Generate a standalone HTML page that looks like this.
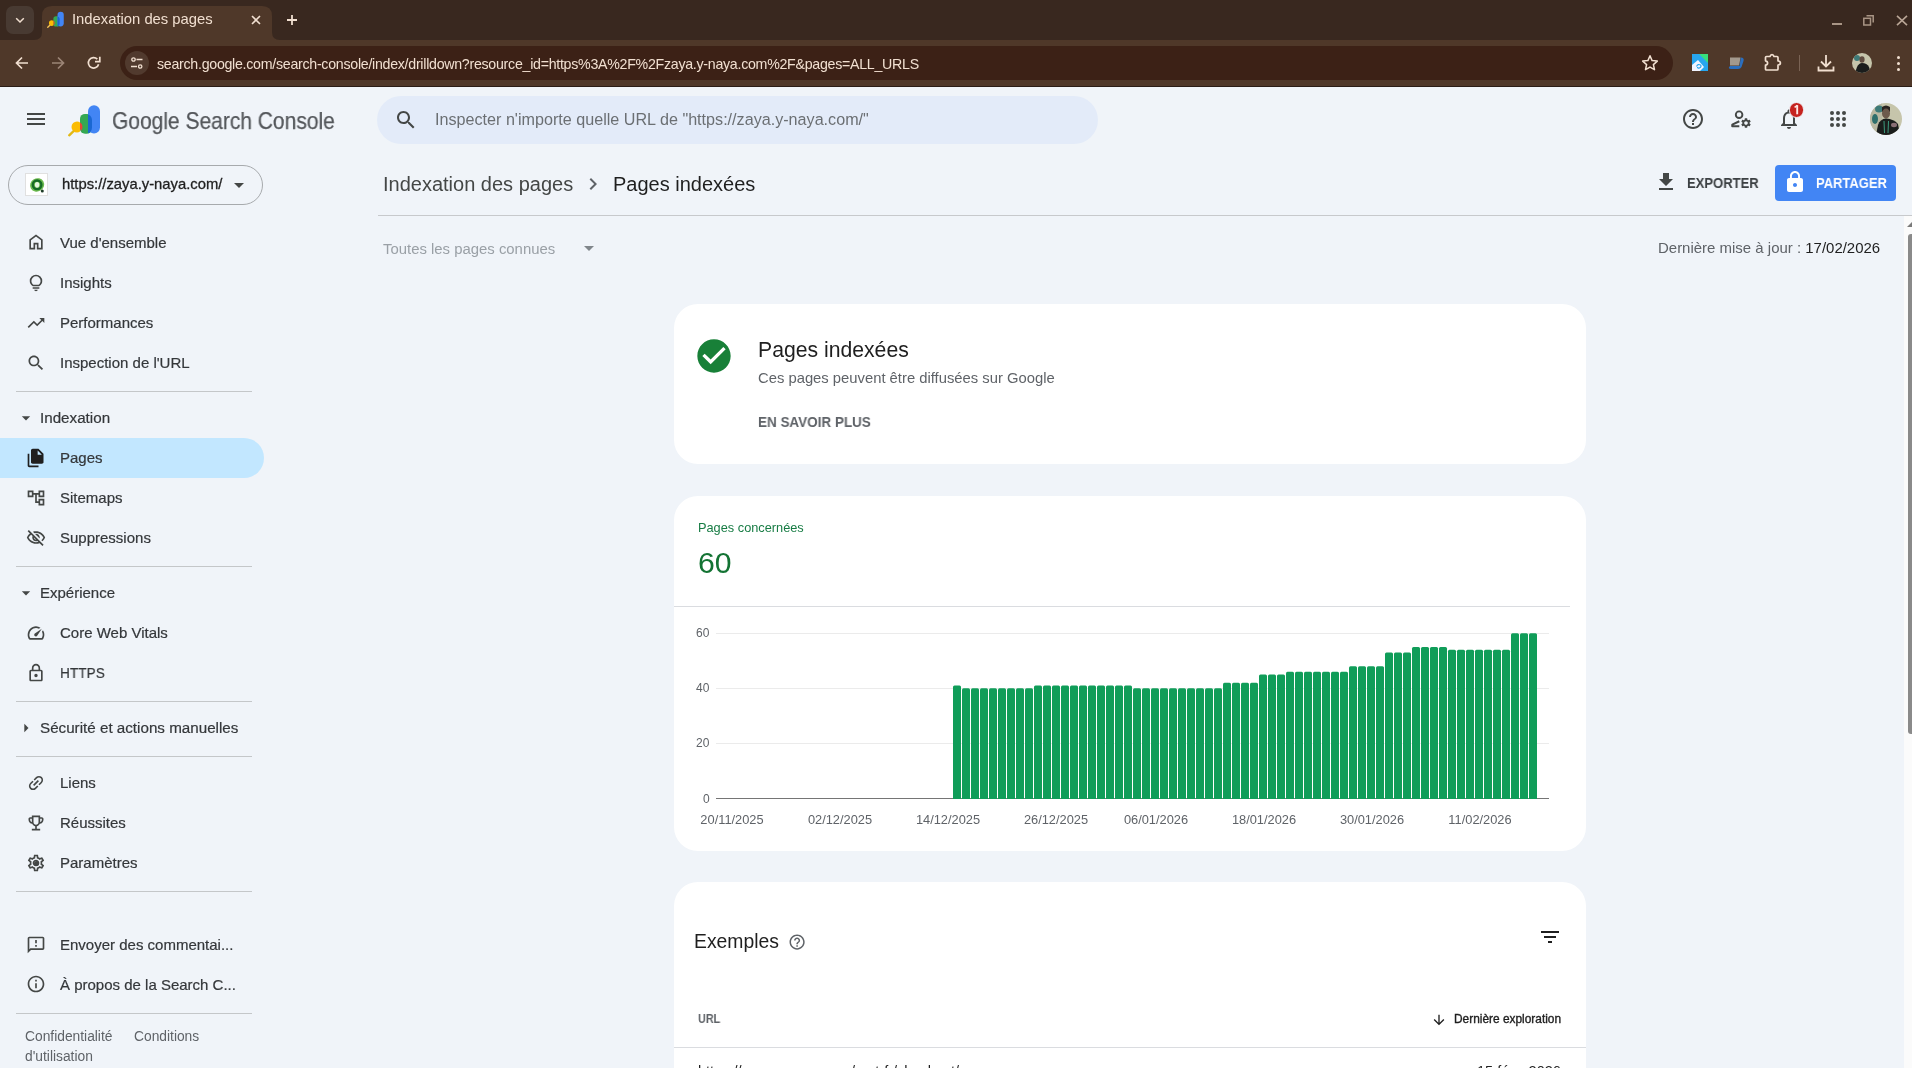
<!DOCTYPE html>
<html><head><meta charset="utf-8"><title>Indexation des pages</title>
<style>
html,body{margin:0;padding:0;width:1912px;height:1068px;overflow:hidden;background:#f0f4f9;}
body{position:relative;font-family:"Liberation Sans", sans-serif;}
.t{will-change:transform;}
.t{position:absolute;line-height:1;white-space:nowrap;}
.r{position:absolute;}
.s{position:absolute;overflow:visible;}
</style></head><body>
<div class="r" style="left:0px;top:0px;width:1912px;height:40px;background:#39281f;"></div>
<div class="r" style="left:0px;top:40px;width:1912px;height:47px;background:#4f3829;"></div>
<div class="r" style="left:0px;top:86px;width:1912px;height:1px;background:#2a1d16;"></div>
<div class="r" style="left:6px;top:6px;width:28px;height:28px;background:#483a32;border-radius:7px;"></div>
<svg class="s" style="left:14px;top:15px;" width="12" height="10" viewBox="0 0 12 10"><path d="M2.2 3.2 L6 7 L9.8 3.2" stroke="#f1dfd0" stroke-width="1.5" fill="none"/></svg>
<svg class="s" style="left:34px;top:6px;" width="254" height="34" viewBox="0 0 254 34"><path d="M0 34 Q8 34 8 26 L8 10 Q8 0 18 0 L228 0 Q238 0 238 10 L238 26 Q238 34 246 34 Z" fill="#4f3829"/></svg>
<svg class="s" style="left:44.2px;top:8.9px;" width="22.9" height="20.8" viewBox="0 0 44 40"><defs><clipPath id="gclip2"><rect x="18" y="13.9" width="12" height="19.8" rx="6"/></clipPath></defs>
<rect x="18" y="13.9" width="12" height="19.8" rx="5" fill="#34a853"/>
<rect x="26" y="5.2" width="12" height="28.3" rx="6" fill="#4285f4"/>
<g clip-path="url(#gclip2)"><rect x="26" y="5" width="12" height="30" fill="#1967d2"/><circle cx="15" cy="27" r="5.5" fill="#ea4335"/></g>
<path d="M15 21.5 A5.5 5.5 0 0 0 15 32.5 A5.5 5.5 0 0 0 18 31.6 V22.4 A5.5 5.5 0 0 0 15 21.5Z" fill="#fbbc04"/>
<path d="M7.2 35.3 L11.3 31.4" stroke="#f2c25a" stroke-width="2.6" stroke-linecap="round"/></svg>
<div class="t" style="left:72.00px;top:11.97px;font-size:14.8px;color:#f1dfd0;font-weight:400;">Indexation des pages</div>
<svg class="s" style="left:251px;top:15px;" width="10" height="10" viewBox="0 0 10 10"><path d="M1 1L9 9M9 1L1 9" stroke="#f1dfd0" stroke-width="1.6"/></svg>
<svg class="s" style="left:286px;top:14px;" width="12" height="12" viewBox="0 0 12 12"><path d="M6 1V11M1 6H11" stroke="#f1dfd0" stroke-width="1.8"/></svg>
<div class="r" style="left:1832px;top:23px;width:10px;height:1.5px;background:#a99585;"></div>
<svg class="s" style="left:1863px;top:15px;" width="12" height="11" viewBox="0 0 12 11"><path d="M3.5 0.8H10.2V7.5" stroke="#a99585" stroke-width="1.5" fill="none"/><rect x="0.8" y="3.3" width="6.7" height="6.7" stroke="#a99585" stroke-width="1.5" fill="none"/></svg>
<svg class="s" style="left:1896px;top:15px;" width="12" height="11" viewBox="0 0 12 11"><path d="M1 0.8L11 10.2M11 0.8L1 10.2" stroke="#b9a595" stroke-width="1.6"/></svg>
<svg class="s" style="left:15px;top:56px;" width="14" height="14" viewBox="0 0 14 14"><path d="M13 7H2M7 1.5L1.5 7L7 12.5" stroke="#f1dfd0" stroke-width="1.7" fill="none"/></svg>
<svg class="s" style="left:51px;top:56px;" width="14" height="14" viewBox="0 0 14 14"><path d="M1 7H12M7 1.5L12.5 7L7 12.5" stroke="#9c8576" stroke-width="1.7" fill="none"/></svg>
<svg class="s" style="left:87px;top:56px;" width="14" height="14" viewBox="0 0 14 14"><path d="M11.6 8.2 A5.2 5.2 0 1 1 10.3 3.2" stroke="#f1dfd0" stroke-width="1.7" fill="none"/><path d="M12.8 0.8 V5.6 H8" stroke="#f1dfd0" stroke-width="1.7" fill="none"/></svg>
<div class="r" style="left:120px;top:46px;width:1553px;height:34px;background:#3c2116;border-radius:17px;"></div>
<div class="r" style="left:125px;top:51px;width:24px;height:24px;background:#513a2e;border-radius:12px;"></div>
<svg class="s" style="left:130px;top:56px;" width="14" height="14" viewBox="0 0 14 14"><circle cx="3.5" cy="3.5" r="1.7" stroke="#f1dfd0" stroke-width="1.3" fill="none"/><path d="M6.5 3.5H12.5M1 10.5H7" stroke="#f1dfd0" stroke-width="1.4"/><circle cx="10.2" cy="10.5" r="1.7" stroke="#f1dfd0" stroke-width="1.3" fill="none"/></svg>
<div class="t" id="urltxt" style="left:157.00px;top:56.58px;font-size:14.2px;color:#f1dfd0;font-weight:400;letter-spacing:-0.27px;">search.google.com/search-console/index/drilldown?resource_id=https%3A%2F%2Fzaya.y-naya.com%2F&amp;pages=ALL_URLS</div>
<svg class="s" style="left:1641px;top:54px;" width="18" height="18" viewBox="0 0 18 18"><path d="M9 1.8 L11.1 6.6 L16.3 7.1 L12.4 10.6 L13.5 15.7 L9 13.1 L4.5 15.7 L5.6 10.6 L1.7 7.1 L6.9 6.6 Z" stroke="#f1dfd0" stroke-width="1.5" fill="none" stroke-linejoin="round"/></svg>
<svg class="s" style="left:1692px;top:54px;" width="16" height="17" viewBox="0 0 16 17"><rect width="16" height="17" fill="#27a6ef"/><path d="M7 0H16V9Z" fill="#37e07d"/><path d="M0 11 L6 6 L12 13 L8 17 H0Z" fill="#f1f4ff"/><path d="M4.5 12.5 Q6 9.5 8.5 11 Q10 12.5 7.5 14 Q5.5 14.5 5.5 13" stroke="#27a6ef" stroke-width="1.1" fill="none"/><path d="M11 17 L16 12 V17Z" fill="#27a6ef"/></svg>
<svg class="s" style="left:1728px;top:56px;" width="18" height="15" viewBox="0 0 18 15"><path d="M2 1.5H12.5L11 9.5H2Z" fill="#a3998d"/><path d="M12.8 1.5 Q16.5 1.5 15.5 5 L13.5 11 Q12.5 13 10 13 H3 Q1 13 0.8 11.5 L2 10 H11.5 Z" fill="#2b6fbf"/></svg>
<svg class="s" style="left:1763px;top:52px;" width="20" height="20" viewBox="0 0 20 20"><path d="M3.5 4.5 H7 Q7.5 2.6 9 2.6 Q10.5 2.6 11 4.5 H14 Q15 4.5 15 5.5 V9 Q17.4 9.2 17.4 11 Q17.4 12.8 15 13 V17 Q15 18 14 18 H3.5 Q2.5 18 2.5 17 V13.2 Q4.6 12.8 4.6 11 Q4.6 9.2 2.5 8.8 V5.5 Q2.5 4.5 3.5 4.5 Z" stroke="#f1dfd0" stroke-width="1.7" fill="none" stroke-linejoin="round"/></svg>
<div class="r" style="left:1798.5px;top:55px;width:1.2px;height:16px;background:#7a6354;"></div>
<svg class="s" style="left:1817px;top:54px;" width="18" height="18" viewBox="0 0 18 18"><path d="M9 1V12M4 7.5L9 12.5L14 7.5" stroke="#f1dfd0" stroke-width="1.8" fill="none"/><path d="M1.5 12.5V16.5H16.5V12.5" stroke="#f1dfd0" stroke-width="1.8" fill="none"/></svg>
<svg class="s" style="left:1852px;top:52.6px;" width="20" height="20" viewBox="0 0 20 20"><defs><clipPath id="pc1"><circle cx="10" cy="10" r="10"/></clipPath></defs><g clip-path="url(#pc1)"><rect width="20" height="20" fill="#c6c5ab"/><ellipse cx="5" cy="5" rx="3" ry="3" fill="#3e7a78"/><ellipse cx="10" cy="6.5" rx="2.6" ry="3.2" fill="#5f4c40"/><path d="M3 20 L5 14 Q7 10 10 10 Q15 10 17 14 L19 20Z" fill="#1a1d1c"/></g></svg>
<div class="r" style="left:1896.5px;top:55.5px;width:3px;height:3px;background:#f1dfd0;border-radius:50%;"></div>
<div class="r" style="left:1896.5px;top:61.5px;width:3px;height:3px;background:#f1dfd0;border-radius:50%;"></div>
<div class="r" style="left:1896.5px;top:67.5px;width:3px;height:3px;background:#f1dfd0;border-radius:50%;"></div>
<svg class="s" style="left:24px;top:107px;" width="24" height="24" viewBox="0 0 24 24"><path d="M3 18h18v-2H3v2zm0-5h18v-2H3v2zm0-7v2h18V6H3z" fill="#444746"/></svg>
<svg class="s" style="left:62px;top:100px;" width="44" height="40" viewBox="0 0 44 40"><defs><clipPath id="gclip"><rect x="18" y="13.9" width="12" height="19.8" rx="6"/></clipPath></defs>
<rect x="18" y="13.9" width="12" height="19.8" rx="5" fill="#34a853"/>
<rect x="26" y="5.2" width="12" height="28.3" rx="6" fill="#4285f4"/>
<g clip-path="url(#gclip)"><rect x="26" y="5" width="12" height="30" fill="#1967d2"/><circle cx="15" cy="27" r="5.5" fill="#ea4335"/></g>
<path d="M15 21.5 A5.5 5.5 0 0 0 15 32.5 A5.5 5.5 0 0 0 18 31.6 V22.4 A5.5 5.5 0 0 0 15 21.5Z" fill="#fbbc04"/>
<path d="M7.2 35.3 L11.3 31.4" stroke="#e2b814" stroke-width="2.3" stroke-linecap="round"/></svg>
<div class="t" style="left:112.00px;top:110.16px;font-size:23.2px;color:#54575b;font-weight:400;-webkit-text-stroke:0.25px #54575b;transform:scaleX(0.905);transform-origin:0 0;">Google Search Console</div>
<div class="r" style="left:377px;top:96px;width:721px;height:48px;background:#e3ebf9;border-radius:24px;"></div>
<svg class="s" style="left:394px;top:108px;" width="24" height="24" viewBox="0 0 24 24"><path d="M15.5 14h-.79l-.28-.27C15.41 12.59 16 11.11 16 9.5 16 5.91 13.09 3 9.5 3S3 5.91 3 9.5 5.91 16 9.5 16c1.61 0 3.09-.59 4.23-1.57l.27.28v.79l5 4.99L20.49 19l-4.99-5zm-6 0C7.01 14 5 11.99 5 9.5S7.01 5 9.5 5 14 7.01 14 9.5 11.99 14 9.5 14z" fill="#444746"/></svg>
<div class="t" style="left:435.00px;top:110.83px;font-size:16.15px;color:#6b6f73;font-weight:400;">Inspecter n'importe quelle URL de "https://zaya.y-naya.com/"</div>
<svg class="s" style="left:1681px;top:107px;" width="24" height="24" viewBox="0 0 24 24"><path d="M11 18h2v-2h-2v2zm1-16C6.48 2 2 6.48 2 12s4.48 10 10 10 10-4.48 10-10S17.52 2 12 2zm0 18c-4.41 0-8-3.59-8-8s3.59-8 8-8 8 3.59 8 8-3.59 8-8 8zm0-14c-2.21 0-4 1.79-4 4h2c0-1.1.9-2 2-2s2 .9 2 2c0 2-3 1.75-3 5h2c0-2.25 3-2.5 3-5 0-2.21-1.79-4-4-4z" fill="#444746"/></svg>
<svg class="s" style="left:1729px;top:108px;" width="26" height="22" viewBox="0 0 26 22"><circle cx="10.1" cy="6.7" r="3.3" stroke="#444746" stroke-width="1.9" fill="none"/>
<path d="M10.3 13.2 L3.3 16.6 V18.2 H10.3" stroke="#444746" stroke-width="2.1" fill="none" stroke-linejoin="round"/></svg>
<svg class="s" style="left:1740.1px;top:116.8px;" width="12" height="12" viewBox="0 0 24 24"><path d="M19.14 12.94c.04-.3.06-.61.06-.94 0-.32-.02-.64-.07-.94l2.03-1.58c.18-.14.23-.41.12-.61l-1.92-3.32c-.12-.22-.37-.29-.59-.22l-2.39.96c-.5-.38-1.03-.7-1.62-.94l-.36-2.54c-.04-.24-.24-.41-.48-.41h-3.84c-.24 0-.43.17-.47.41l-.36 2.54c-.59.24-1.13.57-1.62.94l-2.39-.96c-.22-.08-.47 0-.59.22L2.74 8.87c-.12.21-.08.47.12.61l2.03 1.58c-.05.3-.09.63-.09.94s.02.64.07.94l-2.03 1.58c-.18.14-.23.41-.12.61l1.92 3.32c.12.22.37.29.59.22l2.39-.96c.5.38 1.03.7 1.62.94l.36 2.54c.05.24.24.41.48.41h3.84c.24 0 .44-.17.47-.41l.36-2.54c.59-.24 1.13-.56 1.62-.94l2.39.96c.22.08.47 0 .59-.22l1.92-3.32c.12-.22.07-.47-.12-.61l-2.01-1.58zM12 15.6c-1.98 0-3.6-1.62-3.6-3.6s1.62-3.6 3.6-3.6 3.6 1.62 3.6 3.6-1.62 3.6-3.6 3.6z" fill="#444746"/></svg>
<svg class="s" style="left:1777px;top:107px;" width="24" height="24" viewBox="0 0 24 24"><path d="M12 22c1.1 0 2-.9 2-2h-4c0 1.1.89 2 2 2zm6-6v-5c0-3.07-1.64-5.64-4.5-6.32V4c0-.83-.67-1.5-1.5-1.5s-1.5.67-1.5 1.5v.68C7.63 5.36 6 7.92 6 11v5l-2 2v1h16v-1l-2-2zm-2 1H8v-6c0-2.48 1.51-4.5 4-4.5s4 2.02 4 4.5v6z" fill="#444746"/></svg>
<div class="r" style="left:1788.5px;top:102px;width:15.5px;height:15.5px;background:#c5221f;border-radius:50%;border:0.5px solid #f0f4f9;box-sizing:border-box;"></div>
<svg class="s" style="left:1792px;top:103px;" width="9" height="13" viewBox="0 0 9 13"><path d="M5.2 2.2 V11.3" stroke="#ffe8e6" stroke-width="1.9"/><path d="M5.4 2.4 L2.6 4.4" stroke="#ffe8e6" stroke-width="1.6"/></svg>
<div class="r" style="left:1830.0px;top:111.0px;width:4px;height:4px;background:#444746;border-radius:50%;"></div>
<div class="r" style="left:1830.0px;top:117.2px;width:4px;height:4px;background:#444746;border-radius:50%;"></div>
<div class="r" style="left:1830.0px;top:123.4px;width:4px;height:4px;background:#444746;border-radius:50%;"></div>
<div class="r" style="left:1836.2px;top:111.0px;width:4px;height:4px;background:#444746;border-radius:50%;"></div>
<div class="r" style="left:1836.2px;top:117.2px;width:4px;height:4px;background:#444746;border-radius:50%;"></div>
<div class="r" style="left:1836.2px;top:123.4px;width:4px;height:4px;background:#444746;border-radius:50%;"></div>
<div class="r" style="left:1842.4px;top:111.0px;width:4px;height:4px;background:#444746;border-radius:50%;"></div>
<div class="r" style="left:1842.4px;top:117.2px;width:4px;height:4px;background:#444746;border-radius:50%;"></div>
<div class="r" style="left:1842.4px;top:123.4px;width:4px;height:4px;background:#444746;border-radius:50%;"></div>
<svg class="s" style="left:1870px;top:103px;" width="32" height="32" viewBox="0 0 32 32"><defs><clipPath id="av"><circle cx="16" cy="16" r="16"/></clipPath></defs><g clip-path="url(#av)">
<rect width="32" height="32" fill="#c6c5ab"/><rect x="0" y="0" width="12" height="32" fill="#b9b8a2"/>
<ellipse cx="9" cy="6" rx="4" ry="3.5" fill="#3e7a78"/><ellipse cx="5" cy="16" rx="3" ry="5" fill="#2f6f6c"/>
<path d="M12 4 Q16 1 20 4 L20 9 Q16 7 12 9Z" fill="#2a2420"/>
<ellipse cx="16" cy="10.5" rx="4" ry="5" fill="#6d5a4c"/>
<path d="M6 32 L8 22 Q10 16 16 15.5 Q24 16 28 21 L30 32Z" fill="#1a1d1c"/>
<path d="M14 18 L14.5 30 M18.5 18 L18 30" stroke="#3d9a7e" stroke-width="1"/>
<ellipse cx="24" cy="22" rx="3" ry="2.2" fill="#8a6f76"/></g></svg>
<div class="r" style="left:8px;top:165px;width:255px;height:40px;background:transparent;border:1px solid #a7aaad;border-radius:20px;box-sizing:border-box;"></div>
<div class="r" style="left:25px;top:173px;width:23px;height:23px;background:#ffffff;border:1px solid #e0e0e0;box-sizing:border-box;"></div>
<svg class="s" style="left:28px;top:176px;" width="17" height="17" viewBox="0 0 17 17"><ellipse cx="9.1" cy="8.9" rx="7.2" ry="6.6" fill="#6dbb4f" transform="rotate(-30 9.1 8.9)"/><circle cx="9.1" cy="8.8" r="4.3" stroke="#166b25" stroke-width="2.4" fill="none"/><ellipse cx="9.1" cy="8.8" rx="2.2" ry="2.8" fill="#e6f6e0"/><circle cx="14.3" cy="15.1" r="1.5" fill="#1d3b27"/></svg>
<div class="t" style="left:61.80px;top:177.47px;font-size:14.8px;color:#1f1f1f;font-weight:400;-webkit-text-stroke:0.3px #1f1f1f;">https://zaya.y-naya.com/</div>
<svg class="s" style="left:227px;top:173px;" width="24" height="24" viewBox="0 0 24 24"><path d="M7 10l5 5 5-5z" fill="#444746"/></svg>
<svg class="s" style="left:26px;top:232.4px;" width="20" height="20" viewBox="0 -960 960 960"><path d="M240-200h120v-240h240v240h120v-360L480-740 240-560v360Zm-80 80v-480l320-240 320 240v480H520v-240h-80v240H160Zm320-350Z" fill="#444746"/></svg>
<div class="t" style="left:60.00px;top:234.50px;font-size:15.0px;color:#34373a;font-weight:400;-webkit-text-stroke:0.2px #34373a;">Vue d'ensemble</div>
<svg class="s" style="left:26px;top:272.8px;" width="20" height="20" viewBox="0 -960 960 960"><path d="M480-80q-33 0-56.5-23.5T400-160h160q0 33-23.5 56.5T480-80ZM320-200v-80h320v80H320Zm10-120q-69-41-109.5-110T180-580q0-125 87.5-212.5T480-880q125 0 212.5 87.5T780-580q0 81-40.5 150T630-320H330Zm24-80h252q45-32 69.5-79T700-580q0-92-64-156t-156-64q-92 0-156 64t-64 156q0 54 24.5 101t69.5 79Zm126 0Z" fill="#444746"/></svg>
<div class="t" style="left:60.00px;top:274.90px;font-size:15.0px;color:#34373a;font-weight:400;-webkit-text-stroke:0.2px #34373a;">Insights</div>
<svg class="s" style="left:26px;top:313.0px;" width="20" height="20" viewBox="0 0 24 24"><path d="M16 6l2.29 2.29-4.88 4.88-4-4L2 16.59 3.41 18l6-6 4 4 6.3-6.29L22 12V6z" fill="#444746"/></svg>
<div class="t" style="left:60.00px;top:315.10px;font-size:15.0px;color:#34373a;font-weight:400;-webkit-text-stroke:0.2px #34373a;">Performances</div>
<svg class="s" style="left:26px;top:353.2px;" width="20" height="20" viewBox="0 0 24 24"><path d="M15.5 14h-.79l-.28-.27C15.41 12.59 16 11.11 16 9.5 16 5.91 13.09 3 9.5 3S3 5.91 3 9.5 5.91 16 9.5 16c1.61 0 3.09-.59 4.23-1.57l.27.28v.79l5 4.99L20.49 19l-4.99-5zm-6 0C7.01 14 5 11.99 5 9.5S7.01 5 9.5 5 14 7.01 14 9.5 11.99 14 9.5 14z" fill="#444746"/></svg>
<div class="t" style="left:60.00px;top:355.30px;font-size:15.0px;color:#34373a;font-weight:400;-webkit-text-stroke:0.2px #34373a;">Inspection de l'URL</div>
<div class="r" style="left:16px;top:391px;width:236px;height:1px;background:#c4c7c9;"></div>
<svg class="s" style="left:16px;top:408px;" width="20" height="20" viewBox="0 0 24 24"><path d="M7 10l5 5 5-5z" fill="#444746"/></svg>
<div class="t" style="left:40.20px;top:410.33px;font-size:15.2px;color:#34373a;font-weight:400;-webkit-text-stroke:0.2px #34373a;">Indexation</div>
<div class="r" style="left:0px;top:438px;width:264px;height:40px;background:#c2e7ff;border-radius:0 20px 20px 0;"></div>
<svg class="s" style="left:26px;top:448.0px;" width="20" height="20" viewBox="0 -960 960 960"><path d="M760-200H320q-33 0-56.5-23.5T240-280v-560q0-33 23.5-56.5T320-920h280l240 240v400q0 33-23.5 56.5T760-200ZM560-640h200L560-840v200ZM160-40q-33 0-56.5-23.5T80-120v-560h80v560h440v80H160Z" fill="#1f1f1f"/></svg>
<div class="t" style="left:60.00px;top:450.10px;font-size:15.0px;color:#34373a;font-weight:400;-webkit-text-stroke:0.2px #34373a;">Pages</div>
<svg class="s" style="left:26px;top:488.1px;" width="20" height="20" viewBox="0 0 24 24"><path d="M22 11V3h-7v3H9V3H2v8h7V8h2v10h4v3h7v-8h-7v3h-2V8h2v3h7zM7 9H4V5h3v4zm10 6h3v4h-3v-4zm0-10h3v4h-3V5z" fill="#444746"/></svg>
<div class="t" style="left:60.00px;top:490.20px;font-size:15.0px;color:#34373a;font-weight:400;-webkit-text-stroke:0.2px #34373a;">Sitemaps</div>
<svg class="s" style="left:26px;top:528.0px;" width="20" height="20" viewBox="0 0 24 24"><path d="M12 6c3.79 0 7.17 2.13 8.82 5.5-.59 1.22-1.42 2.27-2.41 3.12l1.41 1.41c1.39-1.23 2.49-2.77 3.18-4.53C21.27 7.11 17 4 12 4c-1.27 0-2.49.2-3.64.57l1.65 1.65C10.66 6.09 11.32 6 12 6zm-1.07 1.14L13 9.21c.57.25 1.03.71 1.28 1.28l2.07 2.07c.08-.34.14-.7.14-1.07C16.5 9.01 14.48 7 12 7c-.37 0-.72.05-1.07.14zM2.01 3.87l2.68 2.68C3.06 7.83 1.77 9.53 1 11.5 2.73 15.89 7 19 12 19c1.52 0 2.98-.29 4.32-.82l3.42 3.42 1.41-1.41L3.42 2.45 2.01 3.87zm7.5 7.5l2.61 2.61c-.04.01-.08.02-.12.02-1.38 0-2.5-1.12-2.5-2.5 0-.05.01-.08.01-.13zm-3.4-3.4l1.75 1.75c-.23.55-.36 1.15-.36 1.78 0 2.48 2.02 4.5 4.5 4.5.63 0 1.23-.13 1.77-.36l.98.98c-.88.24-1.8.38-2.75.38-3.79 0-7.17-2.13-8.82-5.5.7-1.43 1.72-2.61 2.93-3.53z" fill="#444746"/></svg>
<div class="t" style="left:60.00px;top:530.10px;font-size:15.0px;color:#34373a;font-weight:400;-webkit-text-stroke:0.2px #34373a;">Suppressions</div>
<div class="r" style="left:16px;top:566px;width:236px;height:1px;background:#c4c7c9;"></div>
<svg class="s" style="left:16px;top:583px;" width="20" height="20" viewBox="0 0 24 24"><path d="M7 10l5 5 5-5z" fill="#444746"/></svg>
<div class="t" style="left:40.10px;top:585.30px;font-size:15.0px;color:#34373a;font-weight:400;-webkit-text-stroke:0.2px #34373a;">Expérience</div>
<svg class="s" style="left:26px;top:623.1px;" width="20" height="20" viewBox="0 -960 960 960"><path d="M418-340q24 24 62 23.5t56-27.5l224-336-336 224q-27 18-28.5 55t22.5 61Zm62-460q59 0 113.5 16.5T696-734l-76 48q-33-17-68.5-25.5T480-720q-133 0-226.5 93.5T160-400q0 42 11.5 83t32.5 77h552q23-38 33.5-79t10.5-85q0-36-8.5-70T766-540l48-76q30 47 47.5 100T880-406q1 57-13 109t-41 99q-11 18-30 28t-40 10H204q-21 0-40-10t-30-28q-26-45-40-95.5T80-400q0-83 31.5-155.5t86-127Q252-737 325-768.5T480-800Zm7 313Z" fill="#444746"/></svg>
<div class="t" style="left:60.00px;top:625.20px;font-size:15.0px;color:#34373a;font-weight:400;-webkit-text-stroke:0.2px #34373a;">Core Web Vitals</div>
<svg class="s" style="left:26px;top:663.0px;" width="20" height="20" viewBox="0 0 24 24"><path d="M18 8h-1V6c0-2.76-2.24-5-5-5S7 3.24 7 6v2H6c-1.1 0-2 .9-2 2v10c0 1.1.9 2 2 2h12c1.1 0 2-.9 2-2V10c0-1.1-.9-2-2-2zM9 6c0-1.66 1.34-3 3-3s3 1.34 3 3v2H9V6zm9 14H6V10h12v10zm-6-3c1.1 0 2-.9 2-2s-.9-2-2-2-2 .9-2 2 .9 2 2 2z" fill="#444746"/></svg>
<div class="t" style="left:60.00px;top:664.93px;font-size:15.2px;color:#34373a;font-weight:400;-webkit-text-stroke:0.2px #34373a;transform:scaleX(0.9);transform-origin:0 0;">HTTPS</div>
<div class="r" style="left:16px;top:701px;width:236px;height:1px;background:#c4c7c9;"></div>
<svg class="s" style="left:16px;top:718px;" width="20" height="20" viewBox="0 0 24 24"><path d="M10 17l5-5-5-5v10z" fill="#444746"/></svg>
<div class="t" style="left:40.10px;top:720.13px;font-size:15.2px;color:#34373a;font-weight:400;-webkit-text-stroke:0.2px #34373a;">Sécurité et actions manuelles</div>
<div class="r" style="left:16px;top:756px;width:236px;height:1px;background:#c4c7c9;"></div>
<svg class="s" style="left:26px;top:773.0px;transform:rotate(-45deg);" width="20" height="20" viewBox="0 0 24 24"><path d="M3.9 12c0-1.71 1.39-3.1 3.1-3.1h4V7H7c-2.76 0-5 2.24-5 5s2.24 5 5 5h4v-1.9H7c-1.71 0-3.1-1.39-3.1-3.1zM8 13h8v-2H8v2zm9-6h-4v1.9h4c1.71 0 3.1 1.39 3.1 3.1s-1.39 3.1-3.1 3.1h-4V17h4c2.76 0 5-2.24 5-5s-2.24-5-5-5z" fill="#444746"/></svg>
<div class="t" style="left:60.00px;top:775.10px;font-size:15.0px;color:#34373a;font-weight:400;-webkit-text-stroke:0.2px #34373a;">Liens</div>
<svg class="s" style="left:26px;top:812.8px;" width="20" height="20" viewBox="0 0 24 24"><path d="M19 5h-2V3H7v2H5c-1.1 0-2 .9-2 2v1c0 2.55 1.92 4.63 4.39 4.94.63 1.5 1.98 2.63 3.61 2.96V19H7v2h10v-2h-4v-3.1c1.63-.33 2.98-1.46 3.61-2.96C19.08 12.63 21 10.55 21 8V7c0-1.1-.9-2-2-2zM5 8V7h2v3.82C5.84 10.4 5 9.3 5 8zm7 6c-1.65 0-3-1.35-3-3V5h6v6c0 1.65-1.35 3-3 3zm7-6c0 1.3-.84 2.4-2 2.82V7h2v1z" fill="#444746"/></svg>
<div class="t" style="left:60.00px;top:814.90px;font-size:15.0px;color:#34373a;font-weight:400;-webkit-text-stroke:0.2px #34373a;">Réussites</div>
<svg class="s" style="left:26px;top:853.1px;" width="20" height="20" viewBox="0 0 24 24"><path d="M19.43 12.98c.04-.32.07-.64.07-.98 0-.34-.03-.66-.07-.98l2.11-1.65c.19-.15.24-.42.12-.64l-2-3.46c-.09-.16-.26-.25-.44-.25-.06 0-.12.01-.17.03l-2.49 1c-.52-.4-1.08-.73-1.69-.98l-.38-2.65C14.46 2.18 14.25 2 14 2h-4c-.25 0-.46.18-.49.42l-.38 2.65c-.61.25-1.17.59-1.690.98l-2.49-1c-.06-.02-.12-.03-.18-.03-.17 0-.34.09-.43.25l-2 3.46c-.13.22-.07.49.12.64l2.11 1.65c-.04.32-.07.65-.07.98 0 .33.03.66.07.98l-2.11 1.65c-.19.15-.24.42-.12.64l2 3.46c.09.16.26.25.44.25.06 0 .12-.01.17-.03l2.49-1c.52.4 1.08.73 1.69.98l.38 2.65c.03.24.24.42.49.42h4c.25 0 .46-.18.49-.42l.38-2.65c.61-.25 1.17-.59 1.69-.98l2.49 1c.06.02.12.03.18.03.17 0 .34-.09.43-.25l2-3.46c.12-.22.07-.49-.12-.64l-2.11-1.65zm-1.98-1.71c.04.31.05.52.05.73 0 .21-.02.43-.05.73l-.14 1.13.89.7 1.08.84-.7 1.21-1.27-.51-1.04-.42-.9.68c-.43.32-.84.56-1.25.73l-1.06.43-.16 1.13-.2 1.35h-1.4l-.19-1.35-.16-1.13-1.06-.43c-.43-.18-.83-.41-1.23-.71l-.91-.7-1.06.43-1.27.51-.7-1.21 1.08-.84.89-.7-.14-1.13c-.03-.31-.05-.54-.05-.74s.02-.43.05-.73l.14-1.13-.89-.7-1.08-.84.7-1.21 1.27.51 1.04.42.9-.68c.43-.32.84-.56 1.25-.73l1.06-.43.16-1.13.2-1.35h1.39l.19 1.35.16 1.13 1.06.43c.43.18.83.41 1.23.71l.91.7 1.06-.43 1.27-.51.7 1.21-1.07.85-.89.7.14 1.13zM12 8c-2.21 0-4 1.79-4 4s1.79 4 4 4 4-1.79 4-4-1.79-4-4-4zm0 6c-1.1 0-2-.9-2-2s.9-2 2-2 2 .9 2 2-.9 2-2 2z" fill="#444746"/></svg>
<div class="r" style="left:33.5px;top:860.6px;width:5px;height:5px;background:#444746;border-radius:50%;"></div>
<div class="t" style="left:60.00px;top:855.20px;font-size:15.0px;color:#34373a;font-weight:400;-webkit-text-stroke:0.2px #34373a;">Paramètres</div>
<div class="r" style="left:16px;top:891px;width:236px;height:1px;background:#c4c7c9;"></div>
<svg class="s" style="left:26px;top:935.3px;" width="20" height="20" viewBox="0 0 24 24"><path d="M20 2H4c-1.1 0-1.99.9-1.99 2L2 22l4-4h14c1.1 0 2-.9 2-2V4c0-1.1-.9-2-2-2zm0 14H5.17l-.59.59-.58.58V4h16v12zm-9-4h2v2h-2zm0-6h2v4h-2z" fill="#444746"/></svg>
<div class="t" style="left:60.00px;top:937.40px;font-size:15.0px;color:#34373a;font-weight:400;-webkit-text-stroke:0.2px #34373a;">Envoyer des commentai...</div>
<svg class="s" style="left:26px;top:974.4px;" width="20" height="20" viewBox="0 0 24 24"><path d="M11 7h2v2h-2zm0 4h2v6h-2zm1-9C6.48 2 2 6.48 2 12s4.48 10 10 10 10-4.48 10-10S17.52 2 12 2zm0 18c-4.41 0-8-3.59-8-8s3.59-8 8-8 8 3.59 8 8-3.59 8-8 8z" fill="#444746"/></svg>
<div class="t" style="left:60.00px;top:976.90px;font-size:15.0px;color:#34373a;font-weight:400;-webkit-text-stroke:0.2px #34373a;">À propos de la Search C...</div>
<div class="r" style="left:16px;top:1013px;width:236px;height:1px;background:#c4c7c9;"></div>
<div class="t" style="left:24.50px;top:1029.92px;font-size:13.8px;color:#5f6368;font-weight:400;">Confidentialité</div>
<div class="t" style="left:133.50px;top:1029.92px;font-size:13.8px;color:#5f6368;font-weight:400;">Conditions</div>
<div class="t" style="left:24.50px;top:1050.22px;font-size:13.8px;color:#5f6368;font-weight:400;">d'utilisation</div>
<div class="t" style="left:382.50px;top:174.07px;font-size:20px;color:#444746;font-weight:400;">Indexation des pages</div>
<svg class="s" style="left:581px;top:172px;" width="24" height="24" viewBox="0 0 24 24"><path d="M10 6L8.59 7.41 13.17 12l-4.58 4.59L10 18l6-6z" fill="#5f6368"/></svg>
<div class="t" style="left:613.40px;top:174.07px;font-size:20px;color:#1f1f1f;font-weight:400;">Pages indexées</div>
<div class="r" style="left:378px;top:215px;width:1534px;height:1px;background:#c7c9cc;"></div>
<svg class="s" style="left:1654px;top:170px;" width="24" height="24" viewBox="0 0 24 24"><path d="M19 9h-4V3H9v6H5l7 7 7-7zM5 18v2h14v-2H5z" fill="#444746"/></svg>
<div class="t" style="left:1686.50px;top:176.10px;font-size:14.3px;color:#3c4043;font-weight:700;transform:scaleX(0.912);transform-origin:0 0;">EXPORTER</div>
<div class="r" style="left:1775px;top:165px;width:121px;height:36px;background:#4285f4;border-radius:4px;"></div>
<svg class="s" style="left:1783px;top:170px;" width="24" height="24" viewBox="0 0 24 24"><path d="M18 8h-1V6c0-2.76-2.24-5-5-5S7 3.24 7 6v2H6c-1.1 0-2 .9-2 2v10c0 1.1.9 2 2 2h12c1.1 0 2-.9 2-2V10c0-1.1-.9-2-2-2zm-6 9c-1.1 0-2-.9-2-2s.9-2 2-2 2 .9 2 2-.9 2-2 2zm3.1-9H8.9V6c0-1.71 1.39-3.1 3.1-3.1 1.71 0 3.1 1.39 3.1 3.1v2z" fill="#ffffff"/></svg>
<div class="t" style="left:1816.20px;top:176.10px;font-size:14.3px;color:#ffffff;font-weight:700;transform:scaleX(0.908);transform-origin:0 0;">PARTAGER</div>
<div class="t" style="left:382.50px;top:242.19px;font-size:14.9px;color:#9aa0a6;font-weight:400;">Toutes les pages connues</div>
<svg class="s" style="left:577px;top:236px;" width="24" height="24" viewBox="0 0 24 24"><path d="M7 10l5 5 5-5z" fill="#80868b"/></svg>
<div class="t" style="left:1658.00px;top:240.42px;font-size:14.98px;color:#5f6368;font-weight:400;">Dernière mise à jour : <span style="color:#1f1f1f">17/02/2026</span></div>
<div class="r" style="left:1904px;top:216px;width:8px;height:852px;background:#fbfbfb;"></div>
<svg class="s" style="left:1907px;top:222px;" width="5" height="5" viewBox="0 0 5 5"><path d="M0 5 L5 0 L5 5Z" fill="#7a7a7a"/></svg>
<div class="r" style="left:1908px;top:234px;width:6px;height:500px;background:#8a8a8a;border-radius:3px;"></div>
<div class="r" style="left:674px;top:304px;width:912px;height:160px;background:#ffffff;border-radius:24px;"></div>
<svg class="s" style="left:694.0px;top:336.0px;" width="40" height="40" viewBox="0 0 24 24"><path d="M12 2C6.48 2 2 6.48 2 12s4.48 10 10 10 10-4.48 10-10S17.52 2 12 2zm-2 15l-5-5 1.41-1.41L10 14.17l7.59-7.59L19 8l-9 9z" fill="#188038"/></svg>
<div class="t" style="left:758.10px;top:339.05px;font-size:21.2px;color:#1f1f1f;font-weight:400;">Pages indexées</div>
<div class="t" style="left:758.00px;top:370.97px;font-size:14.8px;color:#5f6368;font-weight:400;">Ces pages peuvent être diffusées sur Google</div>
<div class="t" style="left:758.00px;top:415.28px;font-size:14.2px;color:#5f6368;font-weight:700;transform:scaleX(0.95);transform-origin:0 0;">EN SAVOIR PLUS</div>
<div class="r" style="left:674px;top:496px;width:912px;height:355px;background:#ffffff;border-radius:24px;"></div>
<div class="t" style="left:697.90px;top:521.69px;font-size:12.77px;color:#177c44;font-weight:400;">Pages concernées</div>
<div class="t" style="left:698.40px;top:548.44px;font-size:30.2px;color:#137333;font-weight:400;">60</div>
<div class="r" style="left:674px;top:606px;width:896px;height:1px;background:#dadce0;"></div>
<div class="r" style="left:716px;top:743px;width:833px;height:1px;background:#ebebeb;"></div>
<div class="r" style="left:716px;top:688px;width:833px;height:1px;background:#ebebeb;"></div>
<div class="r" style="left:716px;top:633px;width:833px;height:1px;background:#ebebeb;"></div>
<div class="t" style="right:1202.20px;top:792.54px;font-size:12px;color:#5f6368;font-weight:400;">0</div>
<div class="t" style="right:1202.20px;top:737.44px;font-size:12px;color:#5f6368;font-weight:400;">20</div>
<div class="t" style="right:1202.20px;top:682.34px;font-size:12px;color:#5f6368;font-weight:400;">40</div>
<div class="t" style="right:1202.20px;top:627.24px;font-size:12px;color:#5f6368;font-weight:400;">60</div>
<div class="r" style="left:716px;top:798px;width:833px;height:1px;background:#757575;"></div>
<svg class="s" style="left:0;top:0" width="1912" height="1068"><g fill="#109d59"><path d="M953 799.0 V687.04 Q953 685.54 954.5 685.54 H959.5 Q961 685.54 961 687.04 V799.0 Z"/><path d="M962 799.0 V689.80 Q962 688.30 963.5 688.30 H968.5 Q970 688.30 970 689.80 V799.0 Z"/><path d="M971 799.0 V689.80 Q971 688.30 972.5 688.30 H977.5 Q979 688.30 979 689.80 V799.0 Z"/><path d="M980 799.0 V689.80 Q980 688.30 981.5 688.30 H986.5 Q988 688.30 988 689.80 V799.0 Z"/><path d="M989 799.0 V689.80 Q989 688.30 990.5 688.30 H995.5 Q997 688.30 997 689.80 V799.0 Z"/><path d="M998 799.0 V689.80 Q998 688.30 999.5 688.30 H1004.5 Q1006 688.30 1006 689.80 V799.0 Z"/><path d="M1007 799.0 V689.80 Q1007 688.30 1008.5 688.30 H1013.5 Q1015 688.30 1015 689.80 V799.0 Z"/><path d="M1016 799.0 V689.80 Q1016 688.30 1017.5 688.30 H1022.5 Q1024 688.30 1024 689.80 V799.0 Z"/><path d="M1025 799.0 V689.80 Q1025 688.30 1026.5 688.30 H1031.5 Q1033 688.30 1033 689.80 V799.0 Z"/><path d="M1034 799.0 V687.04 Q1034 685.54 1035.5 685.54 H1040.5 Q1042 685.54 1042 687.04 V799.0 Z"/><path d="M1043 799.0 V687.04 Q1043 685.54 1044.5 685.54 H1049.5 Q1051 685.54 1051 687.04 V799.0 Z"/><path d="M1052 799.0 V687.04 Q1052 685.54 1053.5 685.54 H1058.5 Q1060 685.54 1060 687.04 V799.0 Z"/><path d="M1061 799.0 V687.04 Q1061 685.54 1062.5 685.54 H1067.5 Q1069 685.54 1069 687.04 V799.0 Z"/><path d="M1070 799.0 V687.04 Q1070 685.54 1071.5 685.54 H1076.5 Q1078 685.54 1078 687.04 V799.0 Z"/><path d="M1079 799.0 V687.04 Q1079 685.54 1080.5 685.54 H1085.5 Q1087 685.54 1087 687.04 V799.0 Z"/><path d="M1088 799.0 V687.04 Q1088 685.54 1089.5 685.54 H1094.5 Q1096 685.54 1096 687.04 V799.0 Z"/><path d="M1097 799.0 V687.04 Q1097 685.54 1098.5 685.54 H1103.5 Q1105 685.54 1105 687.04 V799.0 Z"/><path d="M1106 799.0 V687.04 Q1106 685.54 1107.5 685.54 H1112.5 Q1114 685.54 1114 687.04 V799.0 Z"/><path d="M1115 799.0 V687.04 Q1115 685.54 1116.5 685.54 H1121.5 Q1123 685.54 1123 687.04 V799.0 Z"/><path d="M1124 799.0 V687.04 Q1124 685.54 1125.5 685.54 H1130.5 Q1132 685.54 1132 687.04 V799.0 Z"/><path d="M1133 799.0 V689.80 Q1133 688.30 1134.5 688.30 H1139.5 Q1141 688.30 1141 689.80 V799.0 Z"/><path d="M1142 799.0 V689.80 Q1142 688.30 1143.5 688.30 H1148.5 Q1150 688.30 1150 689.80 V799.0 Z"/><path d="M1151 799.0 V689.80 Q1151 688.30 1152.5 688.30 H1157.5 Q1159 688.30 1159 689.80 V799.0 Z"/><path d="M1160 799.0 V689.80 Q1160 688.30 1161.5 688.30 H1166.5 Q1168 688.30 1168 689.80 V799.0 Z"/><path d="M1169 799.0 V689.80 Q1169 688.30 1170.5 688.30 H1175.5 Q1177 688.30 1177 689.80 V799.0 Z"/><path d="M1178 799.0 V689.80 Q1178 688.30 1179.5 688.30 H1184.5 Q1186 688.30 1186 689.80 V799.0 Z"/><path d="M1187 799.0 V689.80 Q1187 688.30 1188.5 688.30 H1193.5 Q1195 688.30 1195 689.80 V799.0 Z"/><path d="M1196 799.0 V689.80 Q1196 688.30 1197.5 688.30 H1202.5 Q1204 688.30 1204 689.80 V799.0 Z"/><path d="M1205 799.0 V689.80 Q1205 688.30 1206.5 688.30 H1211.5 Q1213 688.30 1213 689.80 V799.0 Z"/><path d="M1214 799.0 V689.80 Q1214 688.30 1215.5 688.30 H1220.5 Q1222 688.30 1222 689.80 V799.0 Z"/><path d="M1223 799.0 V684.29 Q1223 682.79 1224.5 682.79 H1229.5 Q1231 682.79 1231 684.29 V799.0 Z"/><path d="M1232 799.0 V684.29 Q1232 682.79 1233.5 682.79 H1238.5 Q1240 682.79 1240 684.29 V799.0 Z"/><path d="M1241 799.0 V684.29 Q1241 682.79 1242.5 682.79 H1247.5 Q1249 682.79 1249 684.29 V799.0 Z"/><path d="M1250 799.0 V684.29 Q1250 682.79 1251.5 682.79 H1256.5 Q1258 682.79 1258 684.29 V799.0 Z"/><path d="M1259 799.0 V676.02 Q1259 674.52 1260.5 674.52 H1265.5 Q1267 674.52 1267 676.02 V799.0 Z"/><path d="M1268 799.0 V676.02 Q1268 674.52 1269.5 674.52 H1274.5 Q1276 674.52 1276 676.02 V799.0 Z"/><path d="M1277 799.0 V676.02 Q1277 674.52 1278.5 674.52 H1283.5 Q1285 674.52 1285 676.02 V799.0 Z"/><path d="M1286 799.0 V673.27 Q1286 671.77 1287.5 671.77 H1292.5 Q1294 671.77 1294 673.27 V799.0 Z"/><path d="M1295 799.0 V673.27 Q1295 671.77 1296.5 671.77 H1301.5 Q1303 671.77 1303 673.27 V799.0 Z"/><path d="M1304 799.0 V673.27 Q1304 671.77 1305.5 671.77 H1310.5 Q1312 671.77 1312 673.27 V799.0 Z"/><path d="M1313 799.0 V673.27 Q1313 671.77 1314.5 671.77 H1319.5 Q1321 671.77 1321 673.27 V799.0 Z"/><path d="M1322 799.0 V673.27 Q1322 671.77 1323.5 671.77 H1328.5 Q1330 671.77 1330 673.27 V799.0 Z"/><path d="M1331 799.0 V673.27 Q1331 671.77 1332.5 671.77 H1337.5 Q1339 671.77 1339 673.27 V799.0 Z"/><path d="M1340 799.0 V673.27 Q1340 671.77 1341.5 671.77 H1346.5 Q1348 671.77 1348 673.27 V799.0 Z"/><path d="M1349 799.0 V667.76 Q1349 666.26 1350.5 666.26 H1355.5 Q1357 666.26 1357 667.76 V799.0 Z"/><path d="M1358 799.0 V667.76 Q1358 666.26 1359.5 666.26 H1364.5 Q1366 666.26 1366 667.76 V799.0 Z"/><path d="M1367 799.0 V667.76 Q1367 666.26 1368.5 666.26 H1373.5 Q1375 666.26 1375 667.76 V799.0 Z"/><path d="M1376 799.0 V667.76 Q1376 666.26 1377.5 666.26 H1382.5 Q1384 666.26 1384 667.76 V799.0 Z"/><path d="M1385 799.0 V653.99 Q1385 652.49 1386.5 652.49 H1391.5 Q1393 652.49 1393 653.99 V799.0 Z"/><path d="M1394 799.0 V653.99 Q1394 652.49 1395.5 652.49 H1400.5 Q1402 652.49 1402 653.99 V799.0 Z"/><path d="M1403 799.0 V653.99 Q1403 652.49 1404.5 652.49 H1409.5 Q1411 652.49 1411 653.99 V799.0 Z"/><path d="M1412 799.0 V648.48 Q1412 646.98 1413.5 646.98 H1418.5 Q1420 646.98 1420 648.48 V799.0 Z"/><path d="M1421 799.0 V648.48 Q1421 646.98 1422.5 646.98 H1427.5 Q1429 646.98 1429 648.48 V799.0 Z"/><path d="M1430 799.0 V648.48 Q1430 646.98 1431.5 646.98 H1436.5 Q1438 646.98 1438 648.48 V799.0 Z"/><path d="M1439 799.0 V648.48 Q1439 646.98 1440.5 646.98 H1445.5 Q1447 646.98 1447 648.48 V799.0 Z"/><path d="M1448 799.0 V651.23 Q1448 649.73 1449.5 649.73 H1454.5 Q1456 649.73 1456 651.23 V799.0 Z"/><path d="M1457 799.0 V651.23 Q1457 649.73 1458.5 649.73 H1463.5 Q1465 649.73 1465 651.23 V799.0 Z"/><path d="M1466 799.0 V651.23 Q1466 649.73 1467.5 649.73 H1472.5 Q1474 649.73 1474 651.23 V799.0 Z"/><path d="M1475 799.0 V651.23 Q1475 649.73 1476.5 649.73 H1481.5 Q1483 649.73 1483 651.23 V799.0 Z"/><path d="M1484 799.0 V651.23 Q1484 649.73 1485.5 649.73 H1490.5 Q1492 649.73 1492 651.23 V799.0 Z"/><path d="M1493 799.0 V651.23 Q1493 649.73 1494.5 649.73 H1499.5 Q1501 649.73 1501 651.23 V799.0 Z"/><path d="M1502 799.0 V651.23 Q1502 649.73 1503.5 649.73 H1508.5 Q1510 649.73 1510 651.23 V799.0 Z"/><path d="M1511 799.0 V634.70 Q1511 633.20 1512.5 633.20 H1517.5 Q1519 633.20 1519 634.70 V799.0 Z"/><path d="M1520 799.0 V634.70 Q1520 633.20 1521.5 633.20 H1526.5 Q1528 633.20 1528 634.70 V799.0 Z"/><path d="M1529 799.0 V634.70 Q1529 633.20 1530.5 633.20 H1535.5 Q1537 633.20 1537 634.70 V799.0 Z"/></g></svg>
<div class="t" style="left:732.00px;transform:translateX(-50%);top:814.13px;font-size:12.84px;color:#5f6368;font-weight:400;">20/11/2025</div>
<div class="t" style="left:840.00px;transform:translateX(-50%);top:814.13px;font-size:12.84px;color:#5f6368;font-weight:400;">02/12/2025</div>
<div class="t" style="left:948.20px;transform:translateX(-50%);top:814.13px;font-size:12.84px;color:#5f6368;font-weight:400;">14/12/2025</div>
<div class="t" style="left:1055.90px;transform:translateX(-50%);top:814.13px;font-size:12.84px;color:#5f6368;font-weight:400;">26/12/2025</div>
<div class="t" style="left:1155.80px;transform:translateX(-50%);top:814.13px;font-size:12.84px;color:#5f6368;font-weight:400;">06/01/2026</div>
<div class="t" style="left:1264.30px;transform:translateX(-50%);top:814.13px;font-size:12.84px;color:#5f6368;font-weight:400;">18/01/2026</div>
<div class="t" style="left:1372.00px;transform:translateX(-50%);top:814.13px;font-size:12.84px;color:#5f6368;font-weight:400;">30/01/2026</div>
<div class="t" style="left:1480.00px;transform:translateX(-50%);top:814.13px;font-size:12.84px;color:#5f6368;font-weight:400;">11/02/2026</div>
<div class="r" style="left:674px;top:882px;width:912px;height:200px;background:#ffffff;border-radius:24px 24px 0 0;"></div>
<div class="t" style="left:694.00px;top:931.71px;font-size:19.36px;color:#1f1f1f;font-weight:400;">Exemples</div>
<svg class="s" style="left:787.6px;top:933.1px;" width="18.2" height="18.2" viewBox="0 0 24 24"><path d="M11 18h2v-2h-2v2zm1-16C6.48 2 2 6.48 2 12s4.48 10 10 10 10-4.48 10-10S17.52 2 12 2zm0 18c-4.41 0-8-3.59-8-8s3.59-8 8-8 8 3.59 8 8-3.59 8-8 8zm0-14c-2.21 0-4 1.79-4 4h2c0-1.1.9-2 2-2s2 .9 2 2c0 2-3 1.75-3 5h2c0-2.25 3-2.5 3-5 0-2.21-1.79-4-4-4z" fill="#5f6368"/></svg>
<svg class="s" style="left:1538px;top:925px;" width="24" height="24" viewBox="0 0 24 24"><path d="M10 18h4v-2h-4v2zM3 6v2h18V6H3zm3 7h12v-2H6v2z" fill="#1f1f1f"/></svg>
<div class="t" style="left:697.50px;top:1013.44px;font-size:12px;color:#5f6368;font-weight:700;transform:scaleX(0.9);transform-origin:0 0;">URL</div>
<svg class="s" style="left:1431px;top:1012px;" width="16" height="16" viewBox="0 0 24 24"><path d="M20 12l-1.41-1.41L13 16.17V4h-2v12.17l-5.58-5.59L4 12l8 8 8-8z" fill="#1f1f1f"/></svg>
<div class="t" style="left:1453.50px;top:1013.73px;font-size:11.9px;color:#1f1f1f;font-weight:400;-webkit-text-stroke:0.35px #1f1f1f;">Dernière exploration</div>
<div class="r" style="left:674px;top:1047px;width:912px;height:1px;background:#dadce0;"></div>
<div class="t" style="left:697.60px;top:1063.73px;font-size:14.5px;color:#1f1f1f;font-weight:400;">https://zaya.y-naya.com/cart-fr/checkout/</div>
<div class="t" style="right:351.00px;top:1063.73px;font-size:14.5px;color:#1f1f1f;font-weight:400;">15 févr. 2026</div>

</body></html>
